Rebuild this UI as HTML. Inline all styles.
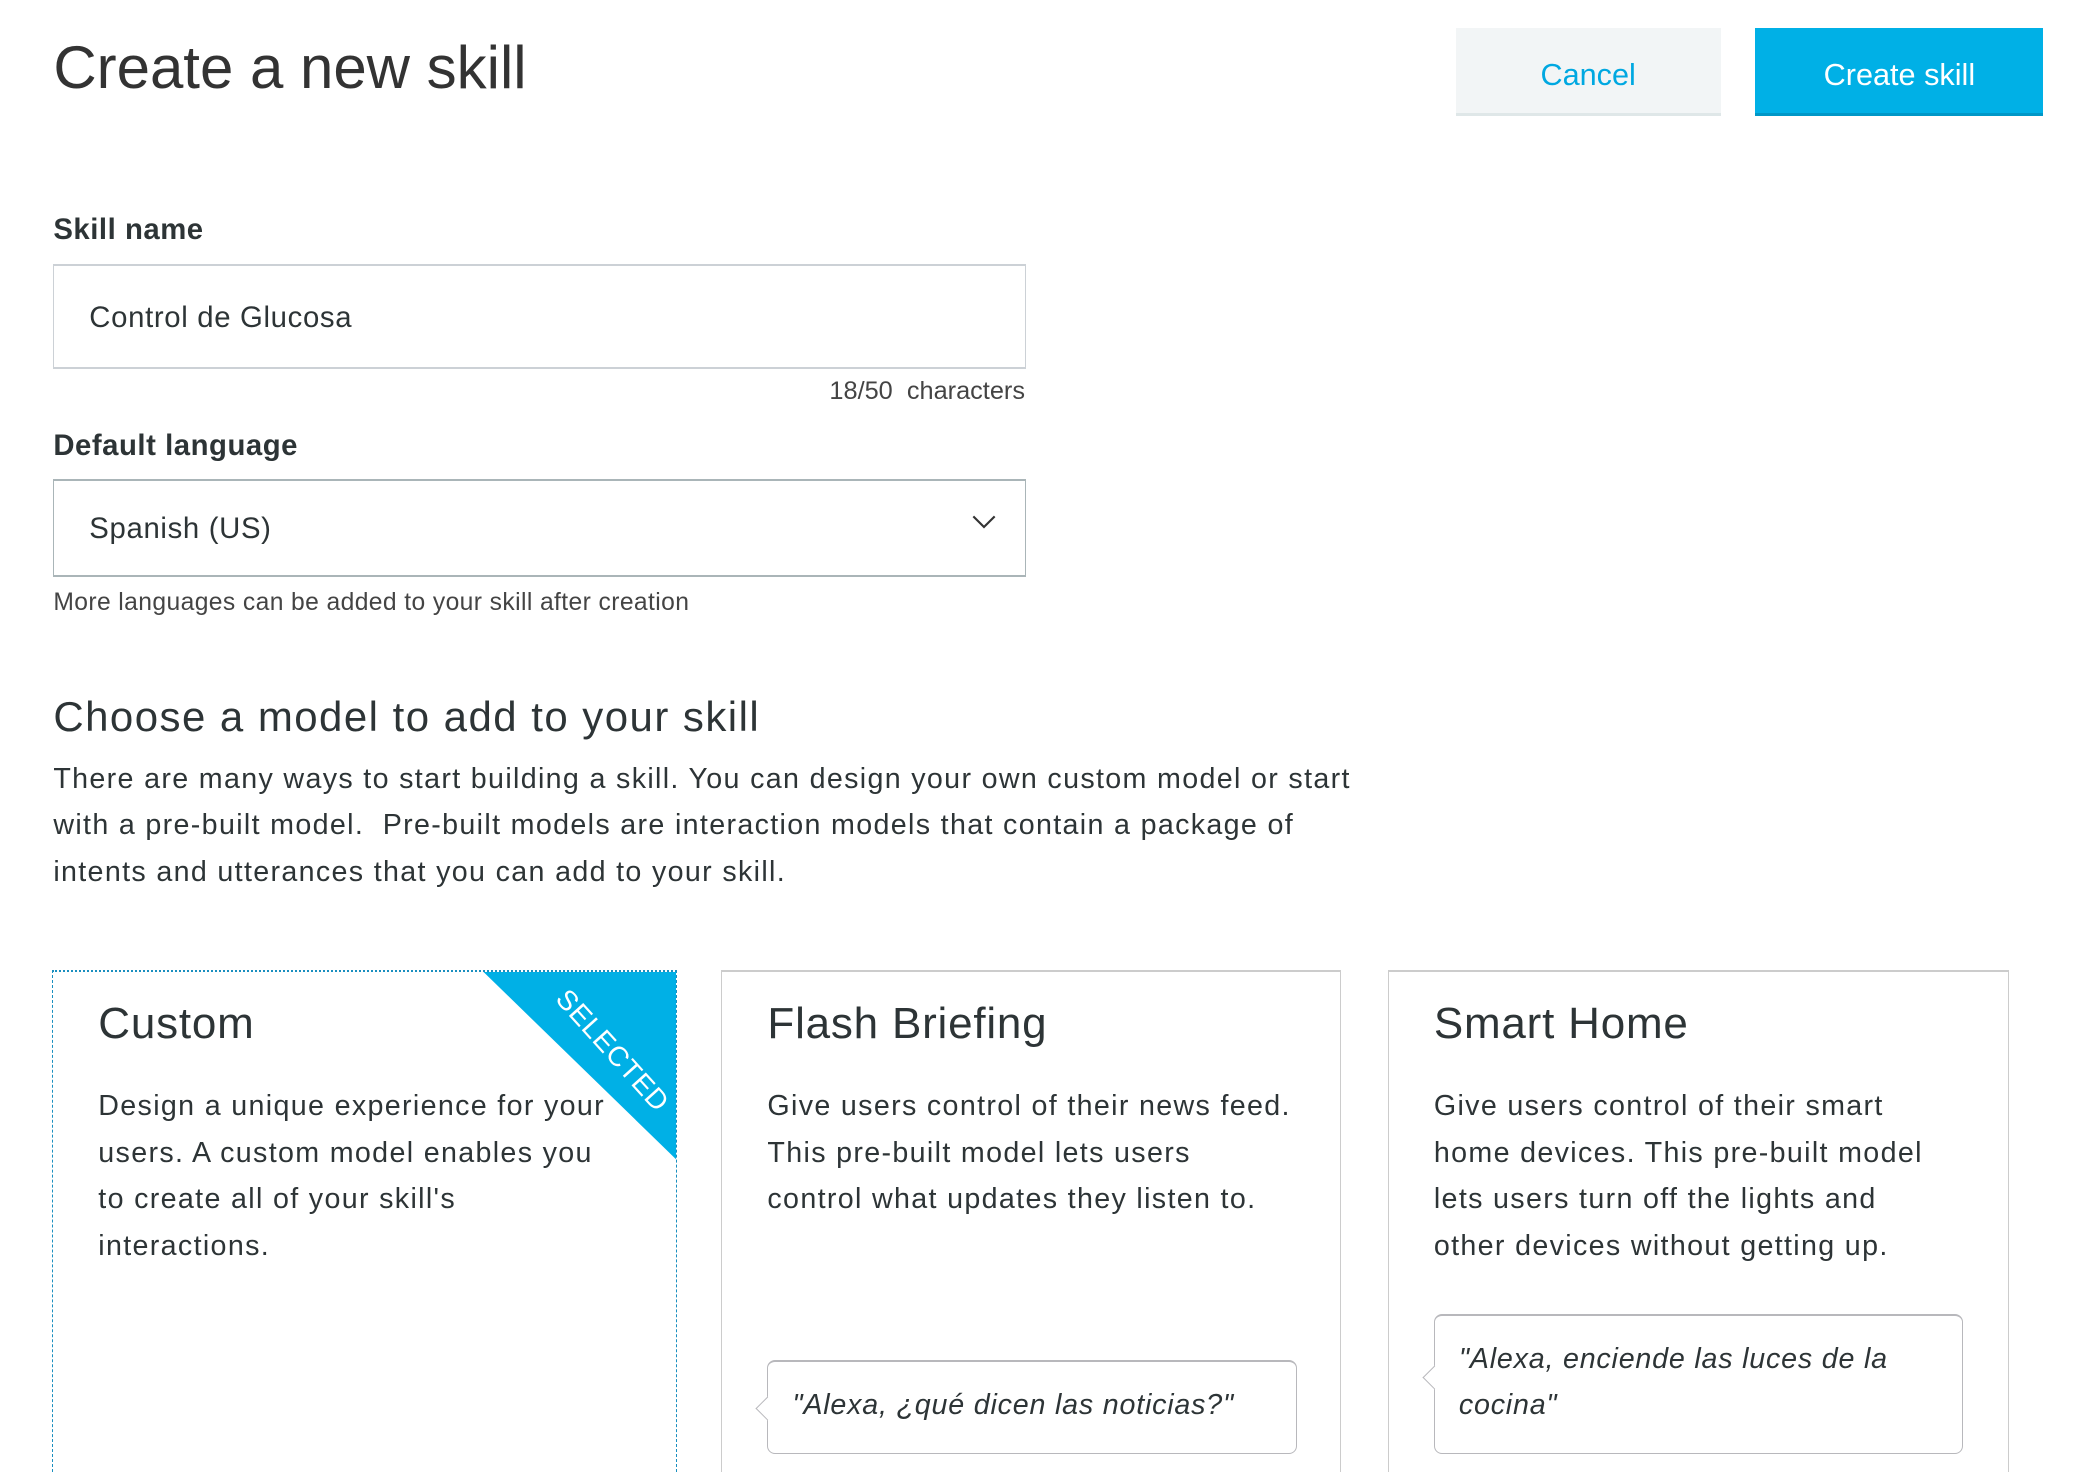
<!DOCTYPE html>
<html><head><meta charset="utf-8"><style>
html{zoom:1.33291;overflow:hidden;height:1104px}
body{margin:0;width:1568px;height:1104px;overflow:hidden;background:#fff;font-family:"Liberation Sans",sans-serif;color:#2d3436;position:relative}
.a{position:absolute;white-space:nowrap}
.btn{position:absolute;top:21px;border-bottom:3px solid;font-size:23px;display:flex;align-items:center;justify-content:center;padding-top:8px;box-sizing:border-box;height:66px}
.card{position:absolute;top:728px;height:376px;border:1px solid #ccc;border-top:2px solid #ccc;border-bottom:none !important;box-sizing:border-box;overflow:hidden}
.card h3{position:absolute;left:34px;top:20px;margin:0;font-size:33px;font-weight:normal;color:#2d3436;letter-spacing:0.6px}
.card p{position:absolute;left:34px;top:83px;margin:0;font-size:21.5px;line-height:35px;white-space:nowrap;letter-spacing:1px}
.q{position:absolute;border:1px solid #b8b8bc;border-top:2px solid #b8b8bc;border-radius:6px;box-sizing:border-box;font-style:italic;font-size:21.5px;line-height:35px;padding-left:18px;letter-spacing:0.6px}
.q:before{content:"";position:absolute;left:-7px;width:12px;height:12px;background:#fff;border-left:1px solid #b8b8bc;border-bottom:1px solid #b8b8bc;transform:rotate(45deg)}
.q1:before{top:28px}.q2:before{top:40px}
</style></head><body>
<div class="a" style="left:40px;top:25px;font-size:45px;font-weight:300;color:#333">Create a new skill</div>
<div class="btn" style="left:1092px;width:199px;background:#f2f5f6;border-color:#dfe7e8;color:#00a8e1">Cancel</div>
<div class="btn" style="left:1317px;width:216px;background:#00b0e6;border-color:#0097c7;color:#fff">Create skill</div>

<div class="a" style="left:40px;top:160px;font-size:22px;font-weight:bold;letter-spacing:0.4px">Skill name</div>
<div class="a" style="left:40px;top:198px;width:730px;height:79px;box-sizing:border-box;border:1px solid #ccd1d6;border-top:2px solid #ccd1d6;border-bottom:2px solid #ccd1d6"></div>
<div class="a" style="left:67px;top:226px;font-size:22px;letter-spacing:0.5px">Control de Glucosa</div>
<div class="a" style="right:799px;top:283px;font-size:19px;color:#444">18/50&nbsp; characters</div>

<div class="a" style="left:40px;top:322px;font-size:22px;font-weight:bold;letter-spacing:0.4px">Default language</div>
<div class="a" style="left:40px;top:359px;width:730px;height:74px;box-sizing:border-box;border:1px solid #aab5b8;border-top:2px solid #aab5b8;border-bottom:2px solid #aab5b8"></div>
<div class="a" style="left:67px;top:384px;font-size:22px;letter-spacing:0.5px">Spanish (US)</div>
<svg class="a" style="left:729px;top:386px" width="18" height="11"><path d="M1 1L9 9L17 1" fill="none" stroke="#333" stroke-width="1.6"/></svg>
<div class="a" style="left:40px;top:442px;font-size:18.5px;color:#444;letter-spacing:0.3px">More languages can be added to your skill after creation</div>

<div class="a" style="left:40px;top:520px;font-size:31.5px;letter-spacing:1.1px">Choose a model to add to your skill</div>
<div class="a" style="left:40px;top:567px;font-size:21.5px;line-height:35px;letter-spacing:1px">There are many ways to start building a skill. You can design your own custom model or start<br>with a pre-built model.&nbsp; Pre-built models are interaction models that contain a package of<br>intents and utterances that you can add to your skill.</div>

<div class="card" style="left:39px;width:469px;border:1.5px dashed #1a8fbf;border-top:2px dotted #1a8fbf">
<svg class="a" style="left:0;top:0" width="469" height="160"><polygon points="323,0 469,0 469,142" fill="#00b0e6"/></svg>
<div class="a" style="left:390px;top:8px;color:#fff;font-size:21px;transform:rotate(48deg);transform-origin:0 0;letter-spacing:0.5px">SELECTED</div>
<h3>Custom</h3>
<p>Design a unique experience for your<br>users. A custom model enables you<br>to create all of your skill's<br>interactions.</p>
</div>
<div class="card" style="left:541px;width:465px"><h3>Flash Briefing</h3>
<p>Give users control of their news feed.<br>This pre-built model lets users<br>control what updates they listen to.</p>
<div class="q q1" style="left:34px;top:291px;width:397px;height:70px;padding-top:15px">"Alexa, ¿qué dicen las noticias?"</div>
</div>
<div class="card" style="left:1041px;width:466px"><h3>Smart Home</h3>
<p>Give users control of their smart<br>home devices. This pre-built model<br>lets users turn off the lights and<br>other devices without getting up.</p>
<div class="q q2" style="left:34px;top:256px;width:397px;height:105px;padding-top:15px">"Alexa, enciende las luces de la<br>cocina"</div>
</div>
</body></html>
